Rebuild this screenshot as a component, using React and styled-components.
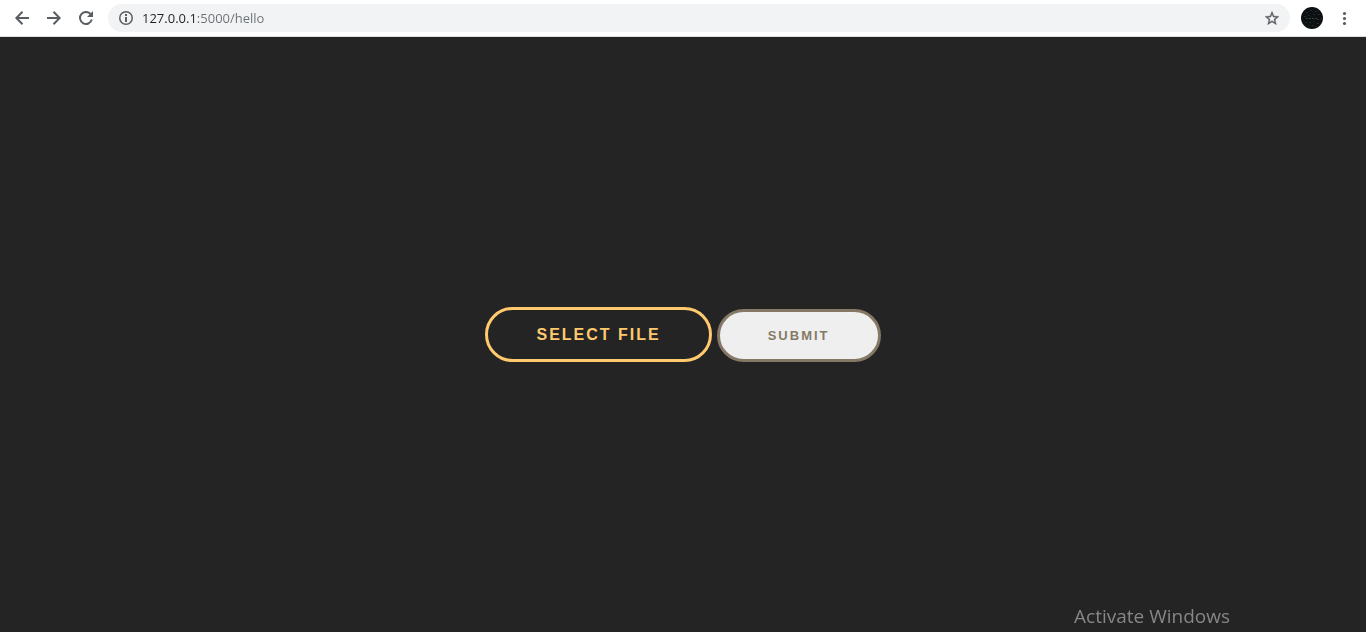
import React from 'react';
import styled, { createGlobalStyle } from 'styled-components';

const GlobalStyle = createGlobalStyle`
  *, *::before, *::after { box-sizing: border-box; }
  body {
    margin: 0;
    background: #242424;
    font-family: "Liberation Sans", Arial, sans-serif;
  }
`;

const Screen = styled.div`
  display: flex;
  flex-direction: column;
  min-height: 100vh;
`;

const Toolbar = styled.header`
  display: flex;
  align-items: center;
  gap: 6px;
  padding: 4px 12px;
  background: #ffffff;
  border-bottom: 1px solid #dcdde0;
`;

const Navigation = styled.nav`
  display: flex;
  gap: 12px;
`;

const IconButton = styled.button`
  display: flex;
  align-items: center;
  justify-content: center;
  flex: none;
  width: 20px;
  height: 20px;
  padding: 0;
  border: 0;
  background: none;
  color: #5a5e63;
`;

const AddressBar = styled.form`
  display: flex;
  align-items: center;
  flex: 1;
  gap: 6px;
  height: 28px;
  margin: 0 4px 0 6px;
  padding: 0 8px;
  border-radius: 14px;
  background: #f1f3f4;
`;

/* The host is dark and the rest of the address is grey. */
const AddressInput = styled.input`
  flex: 1;
  min-width: 0;
  height: 20px;
  padding: 0;
  border: 0;
  outline: 0;
  background: linear-gradient(to right, #202124 54px, #6b6f74 54px);
  -webkit-background-clip: text;
  background-clip: text;
  color: transparent;
  font: 13px/20px "Open Sans", "Noto Sans", sans-serif;
`;

const Profile = styled.button`
  display: flex;
  flex: none;
  width: 22px;
  height: 22px;
  padding: 0;
  border: 0;
  border-radius: 50%;
  overflow: hidden;
  margin: 0 5px 0 1px;
  background: #0c1012;
`;

const Page = styled.main`
  display: flex;
  flex: 1;
  flex-direction: column;
`;

const UploadForm = styled.form`
  display: flex;
  flex: 1;
  align-items: center;
  justify-content: center;
`;

const Actions = styled.div`
  display: flex;
  align-items: flex-end;
  gap: 5px;
`;

const PillButton = styled.button`
  height: ${({ $large }) => ($large ? 55 : 53)}px;
  padding: 0 48px;
  border: 3px solid ${({ $large }) => ($large ? '#ffca6e' : '#857966')};
  border-radius: 28px;
  background: ${({ $large }) => ($large ? 'transparent' : '#efefef')};
  color: ${({ $large }) => ($large ? '#ffca6e' : '#857966')};
  font: bold ${({ $large }) => ($large ? 16 : 13)}px/18px "Liberation Sans", Arial, sans-serif;
  letter-spacing: 2px;
  text-transform: uppercase;
  white-space: nowrap;
`;

const Watermark = styled.div`
  position: fixed;
  right: 136px;
  bottom: 2px;
  color: #868686;
  font: 19px/28px "Open Sans", "Noto Sans", sans-serif;
`;

const BackIcon = () => (
  <svg width="14" height="14" viewBox="0 0 14 14" fill="none" stroke="currentColor" strokeWidth="2" aria-hidden="true">
    <path d="M14 7H2M7.5 0.8 1.4 7l6.1 6.2" />
  </svg>
);

const ForwardIcon = () => (
  <svg width="14" height="14" viewBox="0 0 14 14" fill="none" stroke="currentColor" strokeWidth="2" aria-hidden="true">
    <path d="M0 7h12M6.5 0.8 12.6 7l-6.1 6.2" />
  </svg>
);

const ReloadIcon = () => (
  <svg width="14" height="14" viewBox="0 0 14 14" fill="none" stroke="currentColor" strokeWidth="2" aria-hidden="true">
    <path d="M11.7 3.2A6 6 0 1 0 12.8 8.6" />
    <path d="M14 0v6H8z" fill="currentColor" stroke="none" />
  </svg>
);

const InfoIcon = () => (
  <svg width="14" height="14" viewBox="0 0 14 14" fill="none" stroke="currentColor" aria-hidden="true">
    <circle cx="7" cy="7" r="6.25" strokeWidth="1.5" />
    <path d="M7 6v5M7 3v2" strokeWidth="2" />
  </svg>
);

const StarIcon = () => (
  <svg width="14" height="14" viewBox="2 2 20 19" fill="currentColor" aria-hidden="true">
    <path
      d="m22 9.24-7.19-.62L12 2 9.19 8.63 2 9.24l5.46 4.73L5.82 21 12 17.27 18.18 21l-1.63-7.03zM12 15.4l-3.76 2.27 1-4.28-3.32-2.88 4.38-.38L12 6.1l1.71 4.04 4.38.38-3.32 2.88 1 4.28z"
      stroke="currentColor"
      strokeWidth="0.5"
    />
  </svg>
);

const MenuIcon = () => (
  <svg width="20" height="20" viewBox="0 0 20 20" fill="currentColor" aria-hidden="true">
    <circle cx="10.5" cy="5.5" r="1.6" />
    <circle cx="10.5" cy="10.5" r="1.6" />
    <circle cx="10.5" cy="15.5" r="1.6" />
  </svg>
);

const specks = [
  [5, 5, '#1b2522'], [9, 3, '#20262b'], [14, 4, '#1d2a26'], [17, 7, '#262b31'],
  [3, 9, '#262b2a'], [7, 8, '#182826'], [12, 7, '#26262c'], [19, 11, '#1a2d28'],
  [5, 11, '#2c372e'], [8, 11, '#31452f'], [11, 11, '#433a30'], [14, 11, '#2e4438'],
  [16, 12, '#38302b'], [4, 15, '#1e262b'], [8, 15, '#222d27'], [12, 14, '#1c222b'],
  [16, 16, '#26302b'], [7, 18, '#1d2727'], [11, 18, '#27272d'], [14, 19, '#192a26'],
];

export default function App() {
  const preventSubmit = (event) => event.preventDefault();

  return (
    <Screen>
      <GlobalStyle />
      <Toolbar>
        <Navigation aria-label="Browser navigation">
          <IconButton type="button" aria-label="Back"><BackIcon /></IconButton>
          <IconButton type="button" aria-label="Forward"><ForwardIcon /></IconButton>
          <IconButton type="button" aria-label="Reload"><ReloadIcon /></IconButton>
        </Navigation>
        <AddressBar onSubmit={preventSubmit}>
          <IconButton type="button" aria-label="View site information"><InfoIcon /></IconButton>
          <AddressInput type="text" aria-label="Address" defaultValue="127.0.0.1:5000/hello" spellCheck={false} />
          <IconButton type="button" aria-label="Bookmark this page"><StarIcon /></IconButton>
        </AddressBar>
        <Profile type="button" aria-label="Profile">
          <svg width="22" height="22" viewBox="0 0 22 22" aria-hidden="true">
            {specks.map(([x, y, color]) => (
              <rect key={`${x}-${y}`} x={x} y={y} width="2" height="1" fill={color} />
            ))}
          </svg>
        </Profile>
        <IconButton type="button" aria-label="Browser menu"><MenuIcon /></IconButton>
      </Toolbar>
      <Page>
        <UploadForm onSubmit={preventSubmit}>
          <Actions>
            <PillButton type="button" $large>Select file</PillButton>
            <PillButton type="submit">Submit</PillButton>
          </Actions>
        </UploadForm>
      </Page>
      <Watermark>Activate Windows</Watermark>
    </Screen>
  );
}
